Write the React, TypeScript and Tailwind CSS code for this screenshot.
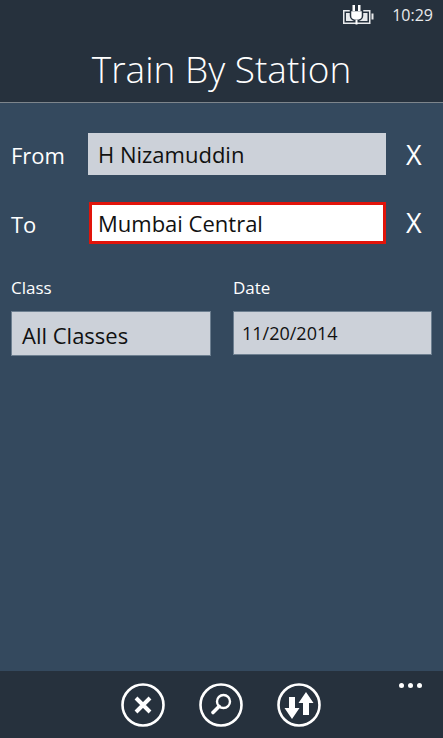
const font = { fontFamily: '"Open Sans", "Noto Sans", sans-serif' };

function CircleIcon({ children }: { children: React.ReactNode }) {
  return (
    <svg width="44" height="44" viewBox="0 0 44 44" fill="none">
      <circle cx="22" cy="22" r="20.5" stroke="white" strokeWidth="2.6" />
      {children}
    </svg>
  );
}

function BatteryIcon() {
  return (
    <svg width="31" height="26" viewBox="0 0 31 26" fill="none">
      <rect x="0.75" y="8.75" width="26" height="12.5" stroke="#e8eaec" strokeWidth="1.5" />
      <rect x="3" y="11" width="21.500" height="8" fill="#e8eaec" />
      <rect x="28.500" y="11.500" width="2" height="6" fill="#e8eaec" />
      <path d="M7.500 8.500h12v5.500c0 3-3 4.500-6 4.500s-6-1.500-6-4.500z" fill="white" stroke="#26313d" strokeWidth="1.500" />
      <rect x="9.500" y="3" width="2.500" height="6" fill="white" />
      <rect x="15" y="3" width="2.500" height="6" fill="white" />
      <rect x="12.500" y="18" width="2" height="4.500" fill="white" />
    </svg>
  );
}

export default function App() {
  return (
    <div className="w-[443px] h-[738px] flex flex-col bg-[#34495e] text-white overflow-hidden" style={font}>
      <header className="h-[103px] shrink-0 bg-[#26313d] border-b border-[#7d858c] flex flex-col">
        <div className="h-[30px] flex items-center justify-end pr-[10px] gap-[18px]">
          <BatteryIcon />
          <span className="text-[16px] leading-none text-[#e8eaec]">10:29</span>
        </div>
        <h1 className="mt-[14px] text-center text-[37px] leading-[50px] font-light">Train By Station</h1>
      </header>

      <main className="flex-1 px-[11px] pt-[30px]">
        <div className="flex items-center h-[42px]">
          <span className="w-[77px] pt-[2px] text-[22px]">From</span>
          <div className="w-[298px] h-[42px] bg-[#ccd1d9] text-[#111] text-[22px] flex items-center pl-[10px]">H Nizamuddin</div>
          <span className="ml-[20px] text-[27px] leading-none pt-[1px]">X</span>
        </div>
        <div className="flex items-center h-[42px] mt-[27px]">
          <span className="w-[78px] pt-[3px] text-[22px]">To</span>
          <div className="w-[297px] h-[42px] bg-white border-[3px] border-[#e1140a] text-[#111] text-[22px] flex items-center pl-[6px]">Mumbai Central</div>
          <span className="ml-[20px] text-[27px] leading-none pb-[1px]">X</span>
        </div>
        <div className="flex mt-[32px]">
          <div className="w-[222px]">
            <div className="text-[17px] leading-[24px]">Class</div>
            <div className="mt-[11px] w-[200px] h-[45px] bg-[#ccd1d9] border border-[#6d7f90] text-[#111] text-[22px] flex items-center pl-[10px] pt-[3px]">All Classes</div>
          </div>
          <div>
            <div className="text-[17px] leading-[24px]">Date</div>
            <div className="mt-[11px] w-[199px] h-[44px] bg-[#ccd1d9] border border-[#6d7f90] text-[#111] text-[18px] flex items-center pl-[8px]">11/20/2014</div>
          </div>
        </div>
      </main>

      <footer className="h-[67px] shrink-0 bg-[#26313d] relative flex justify-center items-center gap-[34px] pr-[1px] pt-[1px]">
        <CircleIcon>
          <path d="M15 15l14 14M29 15l-14 14" stroke="white" strokeWidth="4" />
        </CircleIcon>
        <CircleIcon>
          <circle cx="24.500" cy="18.500" r="6.500" stroke="white" strokeWidth="2.400" />
          <path d="M20 23.500l-6 6" stroke="white" strokeWidth="3.600" strokeLinecap="round" />
        </CircleIcon>
        <CircleIcon>
          <polygon points="12,14 18,14 18,25 22.500,25 15,36 7.500,25 12,25" fill="white" />
          <polygon points="26,32 32,32 32,20 36.500,20 29,9 21.500,20 26,20" fill="white" />
        </CircleIcon>
        <div className="absolute right-[21px] top-[12px] flex gap-[4px]">
          <span className="w-[5px] h-[5px] rounded-full bg-white" />
          <span className="w-[5px] h-[5px] rounded-full bg-white" />
          <span className="w-[5px] h-[5px] rounded-full bg-white" />
        </div>
      </footer>
    </div>
  );
}
